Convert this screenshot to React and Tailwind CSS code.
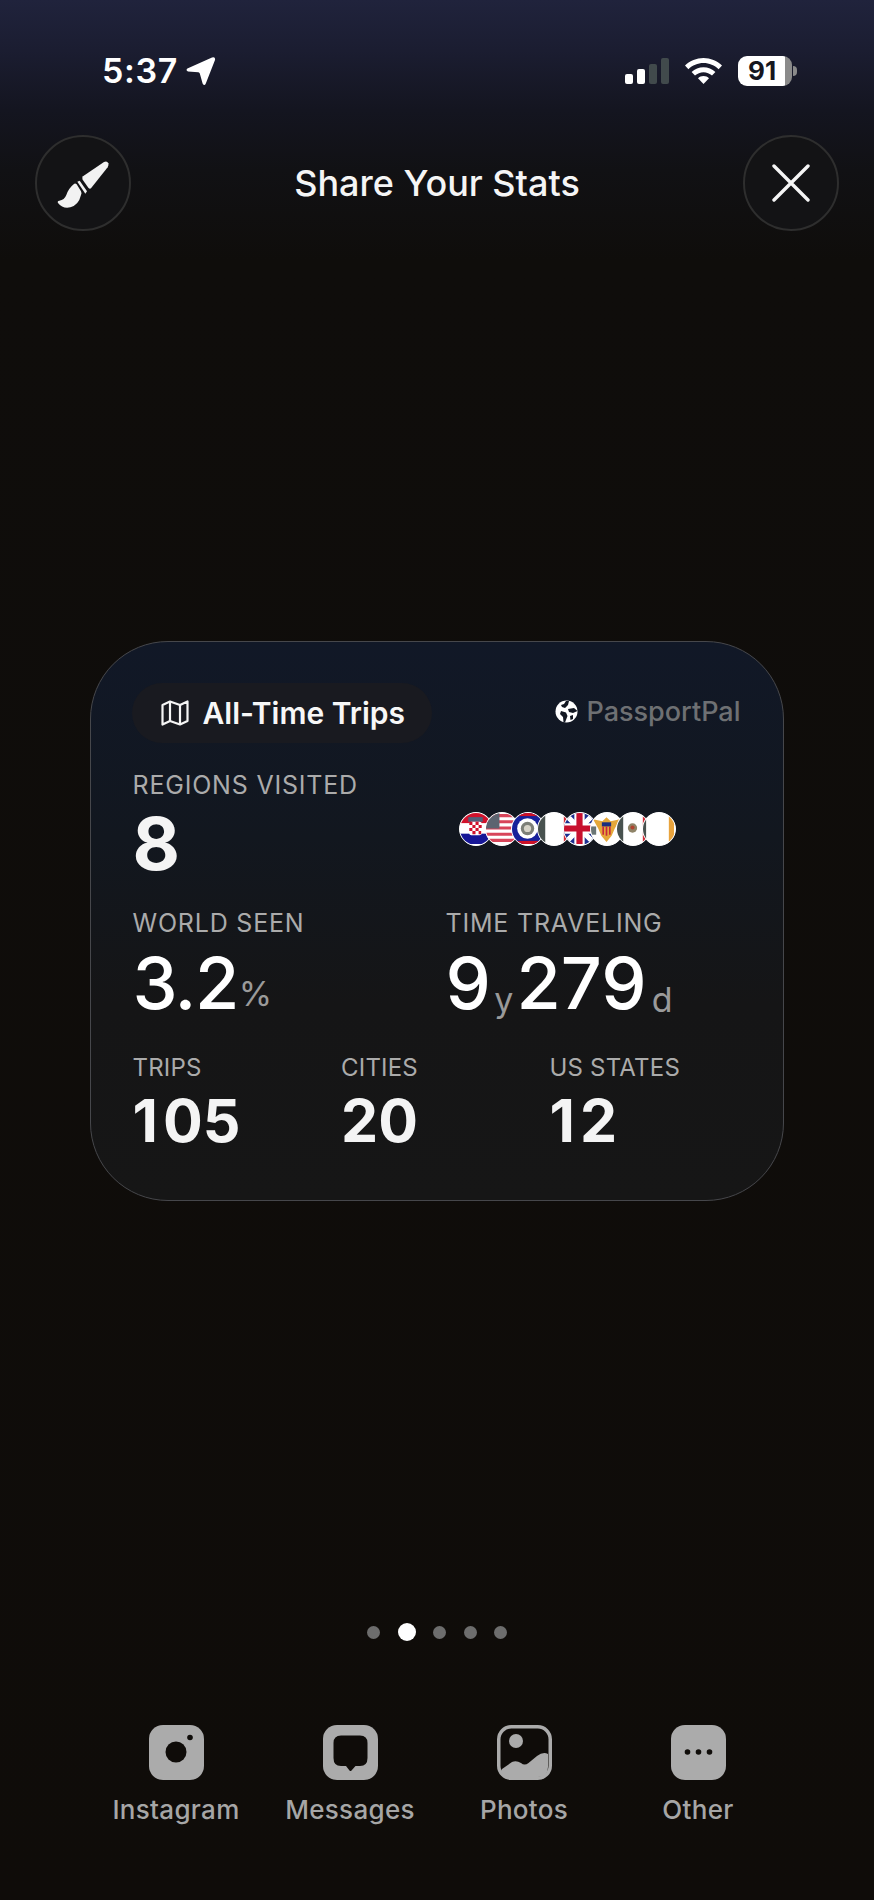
import React from "react";

function Brush() {
  return (
    <svg width="105" height="105" viewBox="0 0 315 315" fill="#f2f2f2" className="shrink-0">
      <path d="M156 136 L219 93 Q228 88 232 97 Q234 103 230 109 L180 172 Q176 175 172 170 L155 146 Q152 140 156 136 Z" />
      <path d="M139 152 L146 149 L168 181 L163 188 Z" />
      <path d="M128 160 Q132 155 137 160 L150 181 Q153 187 150 192 Q143 222 118 229 Q95 234 81 216 Q78 210 85 209 Q100 207 106 192 Q113 172 128 160 Z" />
    </svg>
  );
}

function Wifi() {
  return (
    <svg width="37" height="26" viewBox="0 0 37 26" fill="#fff">
      <path d="M18.5 0 C25.5 0 32 2.8 37 7.5 L33.6 11.2 C29.6 7.4 24.3 5.1 18.5 5.1 C12.7 5.1 7.4 7.4 3.4 11.2 L0 7.5 C5 2.8 11.5 0 18.5 0 Z" />
      <path d="M18.5 9.2 C23 9.2 27.2 11 30.4 14 L27 17.6 C24.7 15.5 21.7 14.2 18.5 14.2 C15.3 14.2 12.3 15.5 10 17.6 L6.6 14 C9.8 11 14 9.2 18.5 9.2 Z" />
      <path d="M18.5 18 C20.6 18 22.6 18.8 24 20.2 L18.5 26 L13 20.2 C14.4 18.8 16.4 18 18.5 18 Z" />
    </svg>
  );
}

function Arrow() {
  return (
    <svg width="30" height="29" viewBox="0 0 30 29" fill="#fff">
      <path d="M26 0.6 Q29.6 -0.4 29 3 L19.8 26.6 Q18.4 29.6 16.6 26.6 L13.8 16.4 Q13.4 15.4 12.4 15.2 L2 14.4 Q-0.6 13.4 1.4 11.4 Z" />
    </svg>
  );
}

function MapIcon() {
  return (
    <svg width="28" height="26" viewBox="0 0 28 26" fill="none" stroke="#f5f5f5" strokeWidth="2.2" strokeLinejoin="round">
      <path d="M1.5 5 L9 1.5 L19 5 L26.5 1.5 V21 L19 24.5 L9 21 L1.5 24.5 Z" />
      <path d="M9 1.5 V21 M19 5 V24.5" />
    </svg>
  );
}

function Globe() {
  return (
    <svg width="23" height="23" viewBox="0 0 23 23">
      <circle cx="11.5" cy="11.5" r="11" fill="#fff" />
      <path d="M11 1 L14 1 L13 5 L10 8 L7 7 L6 5 L9 4 Z" fill="#121722" />
      <path d="M6 11 L11 12.5 L12.5 16 L10 22.5 L8.5 22 L8 17 L5 14 Z" fill="#121722" />
      <path d="M13 9 L19 8 L22.5 11 L18 13 L14 12 Z" fill="#121722" />
      <path d="M15 16 L18 15 L18 19 L15.5 20 Z" fill="#121722" />
    </svg>
  );
}

function Flag({ children }) {
  return (
    <div className="w-[34px] h-[34px] -mr-[7.8px] last:mr-0 rounded-full border-[1.5px] border-white bg-white overflow-hidden shrink-0 relative">
      <svg width="31" height="31" viewBox="0 0 30 30" className="block">{children}</svg>
    </div>
  );
}

const flags = [
  <g key="hr">
    <rect width="30" height="10" fill="#d0122c" />
    <rect y="10" width="30" height="10" fill="#fff" />
    <rect y="20" width="30" height="10" fill="#171796" />
    <rect x="8" y="4" width="14" height="4.5" fill="#51607a" />
    <rect x="9" y="8.5" width="12" height="13" rx="2" fill="#fff" />
    <path d="M9 8.5h3v3h-3zM15 8.5h3v3h-3zM12 11.5h3v3h-3zM18 11.5h3v3h-3zM9 14.5h3v3h-3zM15 14.5h3v3h-3zM12 17.5h3v3h-3zM18 17.5h2.5v3h-2.5z" fill="#d0122c" />
  </g>,
  <g key="us">
    <rect width="30" height="30" fill="#fff" />
    <path d="M0 1h30v3H0zM0 7h30v3H0zM0 13h30v3H0zM0 19h30v3H0zM0 25h30v3H0z" fill="#d8455a" />
    <rect width="13" height="15" fill="#5c6470" />
  </g>,
  <g key="bz">
    <rect width="30" height="30" fill="#17219a" />
    <rect width="30" height="3" fill="#ce1126" />
    <rect y="27" width="30" height="3" fill="#ce1126" />
    <circle cx="15" cy="15" r="10" fill="#fff" />
    <circle cx="15" cy="15" r="6.5" fill="#7d8078" />
    <circle cx="15" cy="15" r="3.5" fill="#d7d4c8" />
  </g>,
  <g key="it">
    <rect width="30" height="30" fill="#fff" />
    <rect width="7" height="30" fill="#48524f" />
    <rect x="25" width="5" height="30" fill="#ce2b37" />
  </g>,
  <g key="gb">
    <rect width="30" height="30" fill="#1c2f8f" />
    <path d="M0 0L30 30M30 0L0 30" stroke="#fff" strokeWidth="5" />
    <path d="M15 0V30M0 15H30" stroke="#fff" strokeWidth="10" />
    <path d="M15 0V30M0 15H30" stroke="#c8102e" strokeWidth="6" />
  </g>,
  <g key="vi">
    <rect width="30" height="30" fill="#fff" />
    <path d="M15 4 L19 8 L28 6 L23 15 L20 22 L15 28 L10 22 L7 15 L2 6 L11 8 Z" fill="#e5a83a" />
    <rect x="10.5" y="9" width="9" height="4" fill="#1c2f7f" />
    <path d="M11 13h1.6v8h-1.6zM14.2 13h1.6v9h-1.6zM17.4 13h1.6v8h-1.6z" fill="#c8283c" />
    <rect x="0" y="13" width="5" height="8" fill="#6a7676" />
  </g>,
  <g key="mx">
    <rect width="30" height="30" fill="#fff" />
    <rect width="6" height="30" fill="#48524f" />
    <rect x="25" width="5" height="30" fill="#ce2b37" />
    <circle cx="15" cy="14.5" r="4.5" fill="#8f8468" />
    <circle cx="15" cy="14" r="2" fill="#b0432f" />
  </g>,
  <g key="ie">
    <rect width="30" height="30" fill="#fff" />
    <rect width="3" height="30" fill="#48524f" />
    <rect x="25" width="5" height="30" fill="#e8a33d" />
  </g>,
];

function Label({ children }) {
  return <div className="text-[25px] leading-[24px] text-[#ababab] tracking-[0.8px] whitespace-nowrap">{children}</div>;
}

function SmallLabel({ children }) {
  return <div className="text-[24px] leading-[24px] text-[#ababab] tracking-[0.2px] whitespace-nowrap">{children}</div>;
}

function Big({ children, tight }) {
  return (
    <span className={tight ? "text-[72px] leading-[72px] font-medium text-white tracking-[-1.5px]" : "text-[72px] leading-[72px] font-medium text-white"}>
      {children}
    </span>
  );
}

function Unit({ children, className }) {
  return <span className={"inline-block text-[#9a9a9a] leading-[72px] " + className}>{children}</span>;
}

function SmallStat({ label, children }) {
  return (
    <div>
      <SmallLabel>{label}</SmallLabel>
      <div className="mt-[12px] text-[59px] leading-[58px] font-bold text-[#f4f4f4]">{children}</div>
    </div>
  );
}

function One() {
  return <span className="tracking-[5px]">1</span>;
}

function Share({ label, children }) {
  return (
    <div className="flex flex-col items-center">
      {children}
      <div className="mt-[15px] text-[26px] leading-[30px] font-medium text-[#a6a6a6] tracking-[0.3px]">{label}</div>
    </div>
  );
}

export default function App() {
  return (
    <div className="w-[874px] h-[1900px] overflow-hidden font-['Inter',sans-serif] bg-[linear-gradient(to_bottom,#20233c_0px,#1b1d31_50px,#141520_110px,#111114_170px,#0f0d0b_260px,#0f0c09_100%)]">
      {/* Status bar */}
      <div className="pt-[55px] pl-[102px] pr-[77px] h-[135px] flex justify-between items-start">
        <div className="flex items-center gap-[8px] h-[32px]">
          <span className="text-[34px] leading-[32px] font-semibold text-white tracking-[0.6px]">5:37</span>
          <Arrow />
        </div>
        <div className="flex items-center h-[32px]">
          <div className="flex items-end gap-[4px] h-[26px]">
            <div className="w-[8px] h-[10px] rounded-[2px] bg-white" />
            <div className="w-[8px] h-[15px] rounded-[2px] bg-white" />
            <div className="w-[8px] h-[20px] rounded-[2px] bg-[#414a4c]" />
            <div className="w-[8px] h-[26px] rounded-[2px] bg-[#414a4c]" />
          </div>
          <div className="ml-[16px]"><Wifi /></div>
          <div className="ml-[16px] w-[54px] h-[30px] rounded-[9px] bg-[linear-gradient(to_right,#ffffff_87%,#8a8a8a_87%)] flex items-center pl-[10px]">
            <span className="text-[26px] leading-[30px] font-bold text-[#15161f]">91</span>
          </div>
          <div className="ml-[1px] w-[4px] h-[10px] rounded-r-full bg-[#8a8a8a]" />
        </div>
      </div>

      {/* Header */}
      <div className="px-[35px] flex items-center justify-between">
        <div className="w-[96px] h-[96px] rounded-full border-2 border-[#2e2e2e] bg-[#131315] flex items-center justify-center">
          <Brush />
        </div>
        <div className="text-[36px] leading-[44px] font-medium text-[#f5f5f5]">Share Your Stats</div>
        <div className="w-[96px] h-[96px] rounded-full border-2 border-[#2e2e2e] bg-[#131315] flex items-center justify-center">
          <svg width="38" height="38" viewBox="0 0 38 38" fill="none" stroke="#f5f5f5" strokeWidth="3.4" strokeLinecap="round">
            <path d="M2 2L36 36M36 2L2 36" />
          </svg>
        </div>
      </div>

      {/* Card */}
      <div className="mt-[410px] mx-[90px] w-[694px] h-[560px] rounded-[78px] border-[1.5px] border-[#46474b] bg-[linear-gradient(to_bottom,#111827_0%,#12171f_35%,#151516_65%,#161616_100%)] pt-[40.5px] pl-[40.5px] pr-[42.5px]">
        <div className="flex items-center justify-between">
          <div className="w-[300px] h-[60px] rounded-full bg-[#191a20] flex items-center pl-[29px] gap-[14px]">
            <MapIcon />
            <span className="text-[30px] leading-[36px] font-semibold text-[#f7f7f7]">All-Time Trips</span>
          </div>
          <div className="flex items-center gap-[8px] -translate-y-[1px]">
            <Globe />
            <span className="text-[27px] leading-[32px] font-medium text-[#6e7073]">PassportPal</span>
          </div>
        </div>

        <div className="mt-[30px] pl-[1px] grid grid-cols-[313px_1fr]">
          <div>
            <Label>REGIONS VISITED</Label>
            <div className="mt-[11px] text-[73px] leading-[72px] font-bold text-[#f4f4f4]">8</div>
          </div>
          <div className="mt-[39px] ml-[13px] flex items-start">
            {flags.map((f, i) => <Flag key={i}>{f}</Flag>)}
          </div>
        </div>

        <div className="mt-[31px] pl-[1px] grid grid-cols-[313px_1fr]">
          <div>
            <Label>WORLD SEEN</Label>
            <div className="mt-[12px] h-[72px] whitespace-nowrap">
              <Big tight>3.2</Big>
              <Unit className="ml-[1px] -translate-y-[3px] text-[34px]">%</Unit>
            </div>
          </div>
          <div>
            <Label>TIME TRAVELING</Label>
            <div className="mt-[12px] h-[72px] whitespace-nowrap">
              <Big tight>9</Big>
              <Unit className="ml-[5px] translate-y-[3px] text-[34px]">y</Unit>
              <span className="ml-[3px]"><Big>279</Big></span>
              <Unit className="ml-[5px] translate-y-[3px] text-[34px]">d</Unit>
            </div>
          </div>
        </div>

        <div className="mt-[37px] pl-[1px] grid grid-cols-[208.5px_208.5px_1fr]">
          <SmallStat label="TRIPS"><One />05</SmallStat>
          <SmallStat label="CITIES">20</SmallStat>
          <SmallStat label="US STATES"><One />2</SmallStat>
        </div>
      </div>

      {/* Page dots */}
      <div className="mt-[422px] flex items-center justify-center gap-[17.5px] h-[18px]">
        <div className="w-[13px] h-[13px] rounded-full bg-[#6d6d6d]" />
        <div className="w-[18px] h-[18px] rounded-full bg-white" />
        <div className="w-[13px] h-[13px] rounded-full bg-[#6d6d6d]" />
        <div className="w-[13px] h-[13px] rounded-full bg-[#6d6d6d]" />
        <div className="w-[13px] h-[13px] rounded-full bg-[#6d6d6d]" />
      </div>

      {/* Share row */}
      <div className="mt-[84px] ml-[89px] w-[696px] grid grid-cols-4">
        <Share label="Instagram">
          <svg width="55" height="55" viewBox="0 0 55 55">
            <rect width="55" height="55" rx="14" fill="#ababab" />
            <circle cx="27" cy="27" r="10.5" fill="#0f0c09" />
            <circle cx="41" cy="12.5" r="2.8" fill="#0f0c09" />
          </svg>
        </Share>
        <Share label="Messages">
          <svg width="55" height="55" viewBox="0 0 55 55">
            <rect width="55" height="55" rx="14" fill="#ababab" />
            <path d="M18 10.5 H37 Q44.5 10.5 44.5 18 V33 Q44.5 41 37 41 H32.5 L28.5 45.5 Q27.5 46.5 26.5 45.5 L23 41 H18 Q10.5 41 10.5 33 V18 Q10.5 10.5 18 10.5 Z" fill="#0f0c09" />
          </svg>
        </Share>
        <Share label="Photos">
          <svg width="55" height="55" viewBox="0 0 55 55">
            <rect x="1.75" y="1.75" width="51.5" height="51.5" rx="12.5" fill="#0f0c09" stroke="#ababab" strokeWidth="3.5" />
            <circle cx="19" cy="16" r="7" fill="#ababab" />
            <path d="M5 44 L15 37 Q19.5 35 24 38 Q27.5 41 31.5 38 L40 31 Q46 26.5 51 29 V42 Q51 52 41 52 H14 Q6 52 4 46 Z" fill="#ababab" />
          </svg>
        </Share>
        <Share label="Other">
          <svg width="55" height="55" viewBox="0 0 55 55">
            <rect width="55" height="55" rx="14" fill="#ababab" />
            <circle cx="16.5" cy="27" r="2.8" fill="#0f0c09" />
            <circle cx="27.5" cy="27" r="2.8" fill="#0f0c09" />
            <circle cx="38.5" cy="27" r="2.8" fill="#0f0c09" />
          </svg>
        </Share>
      </div>
    </div>
  );
}
